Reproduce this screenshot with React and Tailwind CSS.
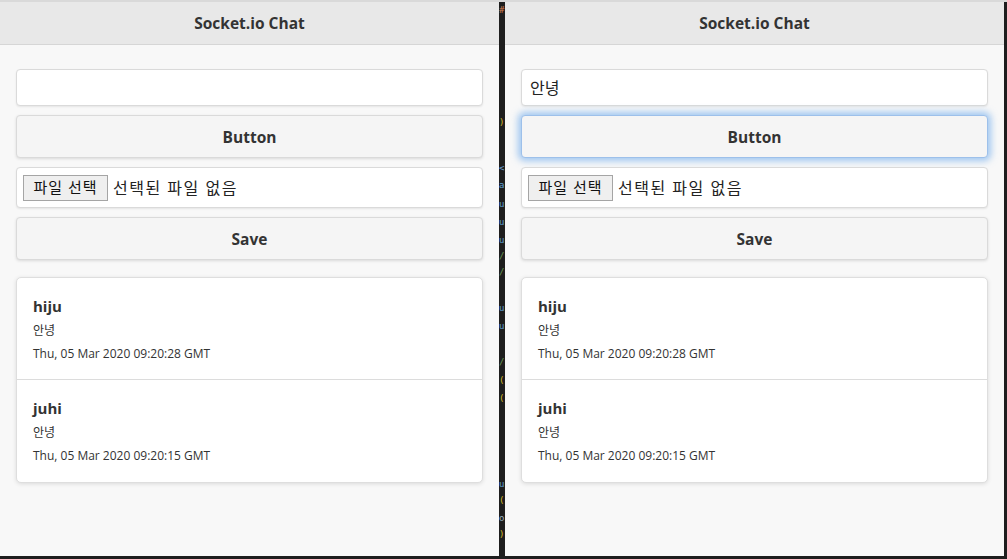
import React from "react";

const font = { fontFamily: '"Open Sans", "Noto Sans CJK KR", sans-serif' };

function Message({ name, text, date, last }) {
  return (
    <div className={`px-4 pt-[17px] h-[102px] ${last ? "" : "border-b border-[#dcdcdc]"}`}>
      <div className="text-[15px] font-bold text-[#333] leading-[22px]">{name}</div>
      <div className="text-[12px] text-[#333] leading-[16px] mt-[6px]">{text}</div>
      <div className="text-[12px] text-[#333] leading-[16px] mt-[7px]">{date}</div>
    </div>
  );
}

function ChatWindow({ value, focused }) {
  return (
    <div className="w-[499px] h-full flex flex-col bg-[#f8f8f8]">
      <div className="h-[43px] shrink-0 bg-[#e8e8e8] border-b border-[#d6d6d6] flex items-center justify-center pt-[2px]">
        <span className="text-[15.5px] font-bold text-[#333]">Socket.io Chat</span>
      </div>
      <div className="px-4 pt-[24px] flex flex-col">
        <div className="h-[37px] bg-white border border-[#dadada] rounded-[4px] shadow-[0_1px_2px_rgba(0,0,0,0.08)] flex items-center px-2 text-[16px] text-[#222]">
          {value}
        </div>
        <div
          className={`mt-[9px] h-[43px] bg-[#f5f5f5] border rounded-[4px] flex items-center justify-center pt-[2px] text-[15.5px] font-bold text-[#333] ${
            focused
              ? "border-[#9dc0ea] shadow-[0_0_7px_3px_rgba(100,165,235,0.6)]"
              : "border-[#dadada] shadow-[0_1px_3px_rgba(0,0,0,0.12)]"
          }`}
        >
          Button
        </div>
        <div className="mt-[9px] h-[41px] bg-white border border-[#dadada] rounded-[4px] shadow-[0_1px_2px_rgba(0,0,0,0.08)] flex items-center pl-[6px] text-[#222]">
          <div className="h-[26px] w-[85px] border border-[#a5a5a5] bg-[#efefef] flex items-center justify-center text-[15px] tracking-[1px] text-[#111]">
            파일 선택
          </div>
          <span className="ml-[5px] text-[16px] tracking-[1.5px]">선택된 파일 없음</span>
        </div>
        <div className="mt-[9px] h-[43px] bg-[#f5f5f5] border border-[#dadada] rounded-[4px] shadow-[0_1px_3px_rgba(0,0,0,0.12)] flex items-center justify-center pt-[2px] text-[15.5px] font-bold text-[#333]">
          Save
        </div>
        <div className="mt-[17px] bg-white border border-[#dedede] rounded-[5px] shadow-[0_1px_4px_rgba(0,0,0,0.12)]">
          <Message name="hiju" text="안녕" date="Thu, 05 Mar 2020 09:20:28 GMT" />
          <Message name="juhi" text="안녕" date="Thu, 05 Mar 2020 09:20:15 GMT" last />
        </div>
      </div>
    </div>
  );
}

const glyphs = [
  { t: "#", y: 2, c: "#ce7b4e" },
  { t: ")", y: 114, c: "#d7ba2a" },
  { t: "<", y: 160, c: "#6a9fd0" },
  { t: "a", y: 177, c: "#5f9fd0" },
  { t: "u", y: 196, c: "#5f9fd0" },
  { t: "u", y: 214, c: "#5f9fd0" },
  { t: "u", y: 232, c: "#5f9fd0" },
  { t: "/", y: 248, c: "#6a9955" },
  { t: "/", y: 264, c: "#6a9955" },
  { t: "u", y: 300, c: "#5f9fd0" },
  { t: "u", y: 318, c: "#5f9fd0" },
  { t: "/", y: 354, c: "#6a9955" },
  { t: "(", y: 372, c: "#d7ba2a" },
  { t: "(", y: 390, c: "#d7ba2a" },
  { t: "u", y: 476, c: "#5f9fd0" },
  { t: "(", y: 492, c: "#d7ba2a" },
  { t: "o", y: 510, c: "#9cb0c0" },
  { t: ")", y: 526, c: "#d7ba2a" },
];

export default function App() {
  return (
    <div style={font} className="w-[1007px] h-[559px] bg-[#1e1e1e] flex flex-col overflow-hidden">
      <div className="h-[2px] bg-[#d9d9d9] shrink-0" />
      <div className="flex h-[554px]">
        <ChatWindow value="" />
        <div className="w-[6px] relative bg-[#1e1e1e] overflow-hidden">
          {glyphs.map((g, i) => (
            <span
              key={i}
              className="absolute left-0 text-[9px] leading-[12px]"
              style={{ top: g.y, color: g.c, fontFamily: '"DejaVu Sans Mono", monospace' }}
            >
              {g.t}
            </span>
          ))}
        </div>
        <ChatWindow value="안녕" focused />
      </div>
    </div>
  );
}
